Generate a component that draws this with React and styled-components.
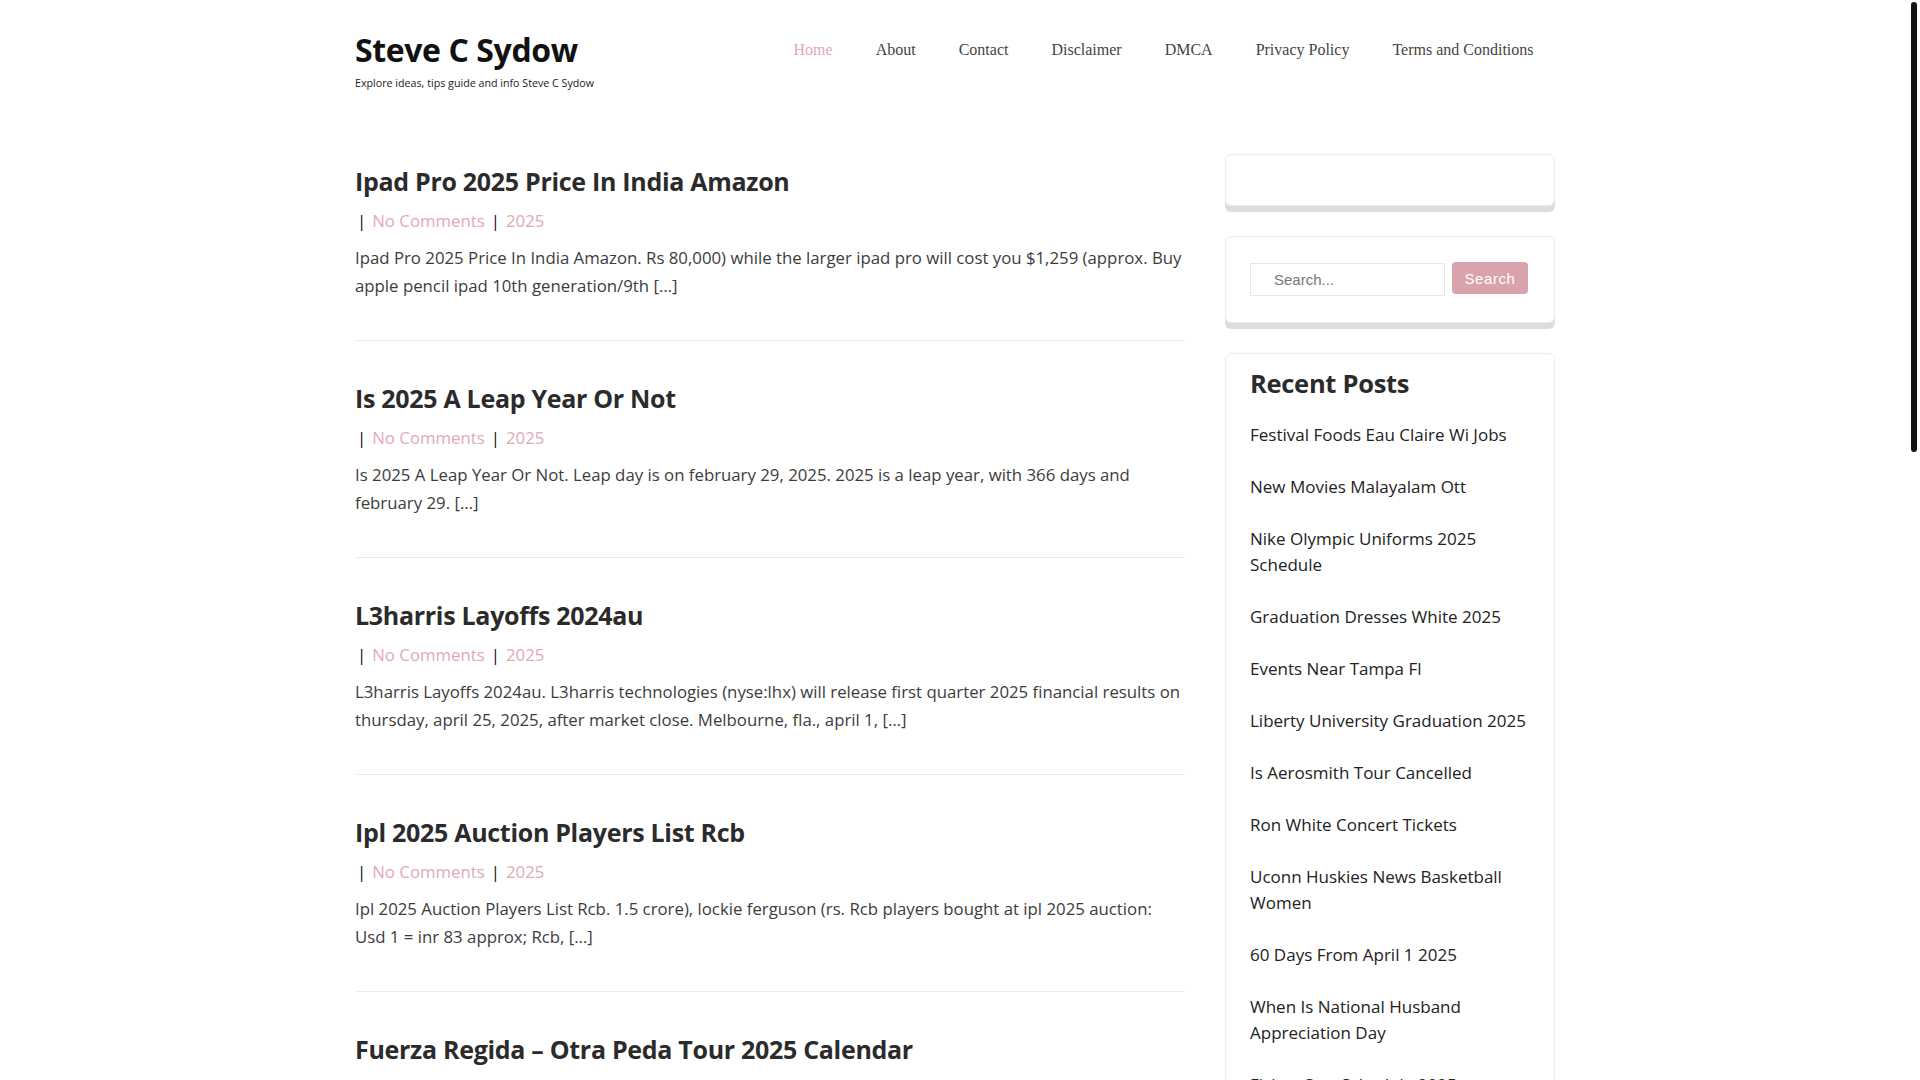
import React from 'react'
import styled, { createGlobalStyle } from 'styled-components'

const PINK = '#e2a9b4'

const GlobalStyle = createGlobalStyle`
  html, body { margin: 0; padding: 0; background: #fff; }
  body {
    font-family: "Open Sans", "Liberation Sans", sans-serif;
    color: #3c3c3c;
  }
  * { box-sizing: border-box; }
`

const Page = styled.div`
  width: 1200px;
  margin: 0 calc(50% - 595px) 0 calc(50% - 605px);
`

// overlay scroll thumb seen at the right edge of the window
const ScrollThumb = styled.div`
  position: fixed;
  top: 2px;
  right: 3px;
  width: 6px;
  height: 450px;
  border-radius: 3px;
  background: #121212;
`

const Header = styled.header`
  display: flex;
  justify-content: space-between;
  align-items: flex-start;
  height: 154px;
  padding-top: 30px;
`

const Brand = styled.div`
  display: flex;
  flex-direction: column;
`

const SiteTitle = styled.a`
  font-size: 32px;
  line-height: 40px;
  font-weight: 700;
  color: #111;
  letter-spacing: -0.4px;
  text-decoration: none;
`

const Tagline = styled.span`
  margin-top: 5px;
  font-size: 10.7px;
  line-height: 16px;
  color: #222;
`

const Nav = styled.nav`
  display: flex;
  margin-top: 8px;
`

const NavLink = styled.a`
  padding: 0 21.5px;
  font-family: "Liberation Serif", "Times New Roman", serif;
  font-size: 16px;
  line-height: 24px;
  color: ${p => (p.$active ? PINK : '#444')};
  text-decoration: none;
`

const Main = styled.div`
  display: grid;
  grid-template-columns: 830px 330px;
  column-gap: 40px;
  align-items: start;
`

const Posts = styled.div`
  display: flex;
  flex-direction: column;
`

const Article = styled.article`
  padding: 39px 0 40px;
  border-bottom: 1px solid #ebebeb;
  &:first-child { padding-top: 9px; }
`

const PostTitle = styled.h2`
  margin: 0;
  font-size: 25px;
  line-height: 36px;
  font-weight: 700;
  color: #2b2b2b;
  letter-spacing: -0.3px;
`

const Meta = styled.div`
  display: flex;
  align-items: center;
  gap: 6px;
  margin-top: 8px;
  padding-left: 2px;
  font-size: 16.8px;
  line-height: 28px;
`

const Pipe = styled.span`
  color: #111;
`

const MetaLink = styled.a`
  color: ${PINK};
  text-decoration: none;
`

const Excerpt = styled.p`
  margin: 9px 0 0;
  font-size: 16.8px;
  line-height: 28px;
  color: #3c3c3c;
`

const Sidebar = styled.aside`
  display: flex;
  flex-direction: column;
  gap: 30px;
`

const Card = styled.section`
  min-height: ${p => p.$minHeight || 0};
  padding: ${p => p.$pad || '26px 24px'};
  background: #fff;
  border: 1px solid #ececf1;
  border-radius: 6px;
  box-shadow: 0 6px 0 0 #dddddd;
`

const SearchForm = styled.form`
  display: flex;
  gap: 7px;
  align-items: flex-start;
`

const SearchInput = styled.input`
  width: 195px;
  height: 33px;
  padding: 0 23px;
  border: 1px solid #e6e6e6;
  font-family: "Liberation Sans", Arial, sans-serif;
  font-size: 15px;
  color: #333;
  outline: none;
  &::placeholder { color: #777; }
`

const SearchButton = styled.button`
  width: 76px;
  height: 32px;
  margin-top: -1px;
  border: 0;
  border-radius: 4px;
  background: #d9a3ac;
  color: #fff;
  font-family: "Liberation Sans", Arial, sans-serif;
  font-size: 15px;
  letter-spacing: 0.6px;
  cursor: pointer;
`

const WidgetTitle = styled.h3`
  margin: 0;
  font-size: 25.5px;
  line-height: 34px;
  font-weight: 700;
  color: #2b2b2b;
  letter-spacing: -0.3px;
`

const RecentList = styled.ul`
  list-style: none;
  margin: 9px 0 0;
  padding: 0;
`

const RecentItem = styled.li`
  padding: 13px 0;
  font-size: 17px;
  line-height: 26px;
  color: #222;
`

const navItems = ['Home', 'About', 'Contact', 'Disclaimer', 'DMCA', 'Privacy Policy', 'Terms and Conditions']

const posts = [
  {
    title: 'Ipad Pro 2025 Price In India Amazon',
    excerpt: 'Ipad Pro 2025 Price In India Amazon. Rs 80,000) while the larger ipad pro will cost you $1,259 (approx. Buy apple pencil ipad 10th generation/9th […]'
  },
  {
    title: 'Is 2025 A Leap Year Or Not',
    excerpt: 'Is 2025 A Leap Year Or Not. Leap day is on february 29, 2025. 2025 is a leap year, with 366 days and february 29. […]'
  },
  {
    title: 'L3harris Layoffs 2024au',
    excerpt: 'L3harris Layoffs 2024au. L3harris technologies (nyse:lhx) will release first quarter 2025 financial results on thursday, april 25, 2025, after market close. Melbourne, fla., april 1, […]'
  },
  {
    title: 'Ipl 2025 Auction Players List Rcb',
    excerpt: 'Ipl 2025 Auction Players List Rcb. 1.5 crore), lockie ferguson (rs. Rcb players bought at ipl 2025 auction: Usd 1 = inr 83 approx; Rcb, […]'
  },
  {
    title: 'Fuerza Regida – Otra Peda Tour 2025 Calendar',
    excerpt: 'Fuerza Regida – Otra Peda Tour 2025 Calendar. The tour kicks off in the spring with dates across the united states and mexico, tickets on sale now. […]'
  }
]

const recent = [
  'Festival Foods Eau Claire Wi Jobs',
  'New Movies Malayalam Ott',
  'Nike Olympic Uniforms 2025 Schedule',
  'Graduation Dresses White 2025',
  'Events Near Tampa Fl',
  'Liberty University Graduation 2025',
  'Is Aerosmith Tour Cancelled',
  'Ron White Concert Tickets',
  'Uconn Huskies News Basketball Women',
  '60 Days From April 1 2025',
  'When Is National Husband Appreciation Day',
  'Fisher Cats Schedule 2025'
]

export default function App() {
  return (
    <>
      <GlobalStyle />
      <ScrollThumb aria-hidden="true" />
      <Page>
        <Header>
          <Brand>
            <SiteTitle href="#">Steve C Sydow</SiteTitle>
            <Tagline>Explore ideas, tips guide and info Steve C Sydow</Tagline>
          </Brand>
          <Nav>
            {navItems.map((item, i) => (
              <NavLink key={item} href="#" $active={i === 0}>{item}</NavLink>
            ))}
          </Nav>
        </Header>
        <Main>
          <Posts>
            {posts.map(post => (
              <Article key={post.title}>
                <PostTitle>{post.title}</PostTitle>
                <Meta>
                  <Pipe>|</Pipe>
                  <MetaLink href="#">No Comments</MetaLink>
                  <Pipe>|</Pipe>
                  <MetaLink href="#">2025</MetaLink>
                </Meta>
                <Excerpt>{post.excerpt}</Excerpt>
              </Article>
            ))}
          </Posts>
          <Sidebar>
            <Card $minHeight="52px" $pad="0" />
            <Card>
              <SearchForm onSubmit={e => e.preventDefault()}>
                <SearchInput type="search" placeholder="Search..." />
                <SearchButton type="submit">Search</SearchButton>
              </SearchForm>
            </Card>
            <Card $pad="12px 24px 26px">
              <WidgetTitle>Recent Posts</WidgetTitle>
              <RecentList>
                {recent.map(r => <RecentItem key={r}>{r}</RecentItem>)}
              </RecentList>
            </Card>
          </Sidebar>
        </Main>
      </Page>
    </>
  )
}
